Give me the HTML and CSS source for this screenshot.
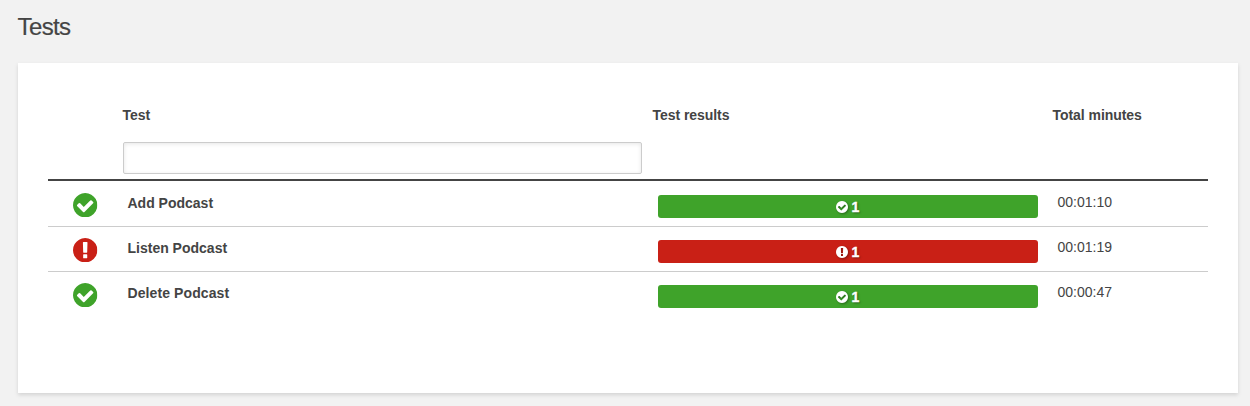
FILE: index.html
```html
<!DOCTYPE html>
<html lang="en">
<head>
<meta charset="utf-8">
<title>Tests</title>
<link rel="stylesheet" href="styles.css">
</head>
<body>
<svg class="sprite" aria-hidden="true">
  <symbol id="check" viewBox="128 128 1536 1536"><path d="M1412 734q0-28-18-46l-91-90q-19-19-45-19t-45 19l-408 407-226-226q-19-19-45-19t-45 19l-91 90q-18 18-18 46 0 27 18 45l362 362q19 19 45 19 27 0 46-19l543-543q18-18 18-45zm252 162q0 209-103 385.5t-279.5 279.5-385.5 103-385.5-103-279.5-279.5-103-385.5 103-385.5 279.5-279.5 385.5-103 385.5 103 279.5 279.5 103 385.5z"/></symbol>
  <symbol id="alert" viewBox="128 128 1536 1536"><path d="M896 128q209 0 385.5 103t279.5 279.5 103 385.5-103 385.5-279.5 279.5-385.5 103-385.5-103-279.5-279.5-103-385.5 103-385.5 279.5-279.5 385.5-103zm128 1247v-190q0-14-9-23.5t-22-9.5h-192q-13 0-23 10t-10 23v190q0 13 10 23t23 10h192q13 0 22-9.5t9-23.5zm-2-344l18-621q0-12-10-18-10-8-24-8h-220q-14 0-24 8-10 6-10 18l17 621q0 10 10 17.5t24 7.5h185q14 0 23.5-7.5t10.5-17.5z"/></symbol>
</svg>
<h1 class="title">Tests</h1>
<main class="panel">
  <div class="row head">
    <div></div>
    <div><span class="label">Test</span><input class="filter" type="text" aria-label="Filter tests"></div>
    <div><span class="label">Test results</span></div>
    <div><span class="label">Total minutes</span></div>
  </div>
  <div class="row item">
    <svg class="status pass"><use href="#check"/></svg>
    <div class="name">Add Podcast</div>
    <div class="bar bar-pass"><svg class="mini"><use href="#check"/></svg><span>1</span></div>
    <div class="time">00:01:10</div>
  </div>
  <div class="row item">
    <svg class="status fail"><use href="#alert"/></svg>
    <div class="name">Listen Podcast</div>
    <div class="bar bar-fail"><svg class="mini"><use href="#alert"/></svg><span>1</span></div>
    <div class="time">00:01:19</div>
  </div>
  <div class="row item">
    <svg class="status pass"><use href="#check"/></svg>
    <div class="name name-wide">Delete Podcast</div>
    <div class="bar bar-pass"><svg class="mini"><use href="#check"/></svg><span>1</span></div>
    <div class="time">00:00:47</div>
  </div>
</main>
</body>
</html>
```

FILE: styles.css
```css
* { box-sizing: border-box; }
body {
  margin: 0;
  padding: 12px 12px 0 18px;
  height: 406px;
  overflow: hidden;
  background: #f2f2f2;
  color: #444;
  font: 14px/20px "Liberation Sans", Arial, sans-serif;
}
.sprite { display: none; }
.title {
  margin: 0 0 21px -0.5px;
  font-size: 24px;
  line-height: 30px;
  font-weight: 400;
  letter-spacing: -0.6px;
  -webkit-text-stroke: 0.2px #444;
}
.panel {
  height: 330px;
  padding: 30px;
  background: #fff;
  box-shadow: 0 2px 4px rgba(0, 0, 0, 0.13);
}
.row {
  display: grid;
  grid-template-columns: 75px 530px 400px 155px;
}
.head {
  height: 88px;
  padding-top: 12px;
  border-bottom: 2px solid #444;
}
.label {
  display: block;
  margin-left: -0.5px;
  font-weight: 700;
  letter-spacing: -0.05px;
}
.filter {
  display: block;
  width: 519px;
  height: 32px;
  margin-top: 17px;
  border: 1px solid #ccc;
  border-radius: 2px;
  background: #fff;
  box-shadow: inset 0 1px 4px rgba(0, 0, 0, 0.1);
}
.item {
  height: 45px;
  align-items: start;
}
.item + .item { border-top: 1px solid #ccc; }
.status {
  width: 24.4px;
  height: 24.4px;
  margin: 12px 0 0 25.2px;
}
.pass { fill: #3fa32a; }
.fail { fill: #c92016; }
.name {
  padding: 12px 0 0 4.5px;
  font-weight: 700;
}
.name-wide { letter-spacing: 0.1px; }
.bar {
  display: flex;
  align-items: center;
  justify-content: center;
  gap: 4px;
  width: 380px;
  height: 23px;
  margin: 14px 0 0 5px;
  padding-right: 1px;
  border-radius: 3px;
  color: #fff;
  font-weight: 700;
  text-shadow: 1px 1px 2px rgba(0, 0, 0, 0.5);
  -webkit-text-stroke: 0.4px #fff;
}
.item + .item .status { margin-top: 11px; }
.item + .item .name { padding-top: 11px; }
.item + .item .bar { margin-top: 13px; }
.bar-pass { background: #3fa32a; }
.bar-fail { background: #c92016; }
.mini {
  width: 12px;
  height: 12px;
  overflow: visible;
  fill: #fff;
  filter: drop-shadow(1px 1px 1px rgba(0, 0, 0, 0.35));
}
.time { padding: 11px 0 0 4.5px; }
.item + .item .time { padding-top: 10px; }
```
